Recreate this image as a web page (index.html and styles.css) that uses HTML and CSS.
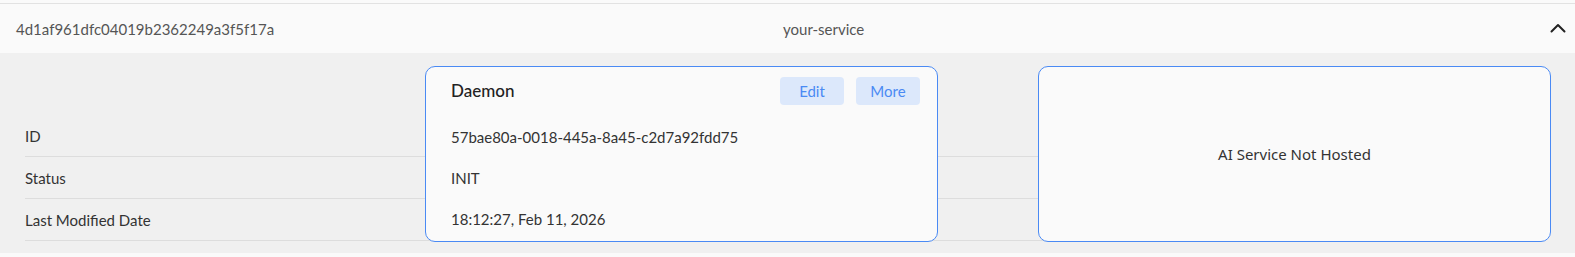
FILE: index.html
```html
<!DOCTYPE html>
<html lang="en">
<head>
    <meta charset="UTF-8">
    <meta name="viewport" content="width=device-width, initial-scale=1.0">
    <title>Service Daemon</title>
    <link rel="stylesheet" href="styles.css">
</head>
<body>
    <div class="panel">
        <div class="panel-head">
            <div class="head-id">4d1af961dfc04019b2362249a3f5f17a</div>
            <div class="head-service">your-service</div>
            <div class="head-toggle">
                <svg xmlns="http://www.w3.org/2000/svg" width="16" height="10" viewBox="0 0 16 10" fill="none" stroke="#222" stroke-width="2" stroke-linecap="round" stroke-linejoin="round">
                    <polyline points="1.5,8.5 8,2 14.5,8.5"></polyline>
                </svg>
            </div>
        </div>

        <div class="panel-body">
            <div class="rows">
                <div class="row">ID</div>
                <div class="row">Status</div>
                <div class="row">Last Modified Date</div>
            </div>

            <div class="cards">
                <div class="card">
                    <div class="card-head">
                        <span class="card-title">Daemon</span>
                        <div class="card-actions">
                            <button class="card-button">Edit</button>
                            <button class="card-button">More</button>
                        </div>
                    </div>
                    <div class="card-value">57bae80a-0018-445a-8a45-c2d7a92fdd75</div>
                    <div class="card-value">INIT</div>
                    <div class="card-value">18:12:27, Feb 11, 2026</div>
                </div>

                <div class="card card-empty">
                    <span>AI Service Not Hosted</span>
                </div>
            </div>
        </div>
    </div>
</body>
</html>
```

FILE: styles.css
```css
body {
    margin: 0;
    padding: 0;
    font-family: Lato, "Noto Sans", sans-serif;
    background-color: #fafafa;
    color: #333;
}

.panel {
    margin-top: 3px;
    border-top: 1px solid #e2e2e2;
}

.panel-head {
    display: flex;
    align-items: center;
    height: 49px;
    padding: 0 9px 0 16px;
    font-size: 15px;
    color: #555;
}

.head-id {
    width: 767px;
}

.head-service {
    flex: 1;
}

.head-toggle {
    display: flex;
    margin-top: -2px;
}

.panel-body {
    display: grid;
    height: 200px;
    background-color: #f0f0f0;
}

.rows,
.cards {
    grid-area: 1 / 1;
}

.rows {
    padding: 62px 35px 0 25px;
}

.row {
    display: flex;
    align-items: center;
    box-sizing: border-box;
    height: 42px;
    border-bottom: 1px solid #dddddd;
    font-size: 15px;
    color: #333;
}

.cards {
    display: flex;
    align-items: flex-start;
    gap: 100px;
    padding: 13px 0 0 425px;
}

.card {
    box-sizing: border-box;
    width: 513px;
    height: 176px;
    padding: 10px 17px 0 25px;
    background-color: #fafafa;
    border: 1px solid #4a8af4;
    border-radius: 10px;
}

.card-head {
    display: flex;
    align-items: center;
    justify-content: space-between;
    height: 28px;
    margin-bottom: 11px;
}

.card-title {
    font-size: 17px;
    font-weight: 500;
    color: #222;
    margin-top: -2px;
}

.card-actions {
    display: flex;
    gap: 12px;
}

.card-button {
    width: 64px;
    height: 28px;
    padding: 0;
    border: none;
    border-radius: 4px;
    background-color: #dce8fb;
    color: #4a8af4;
    font-family: Lato, sans-serif;
    font-size: 15px;
    cursor: pointer;
}

.card-value {
    display: flex;
    align-items: center;
    height: 41px;
    font-size: 15px;
    color: #333;
}

.card-empty {
    display: flex;
    align-items: center;
    justify-content: center;
    padding: 0;
    font-family: "Noto Sans", sans-serif;
    font-size: 15px;
    color: #333;
}
```
